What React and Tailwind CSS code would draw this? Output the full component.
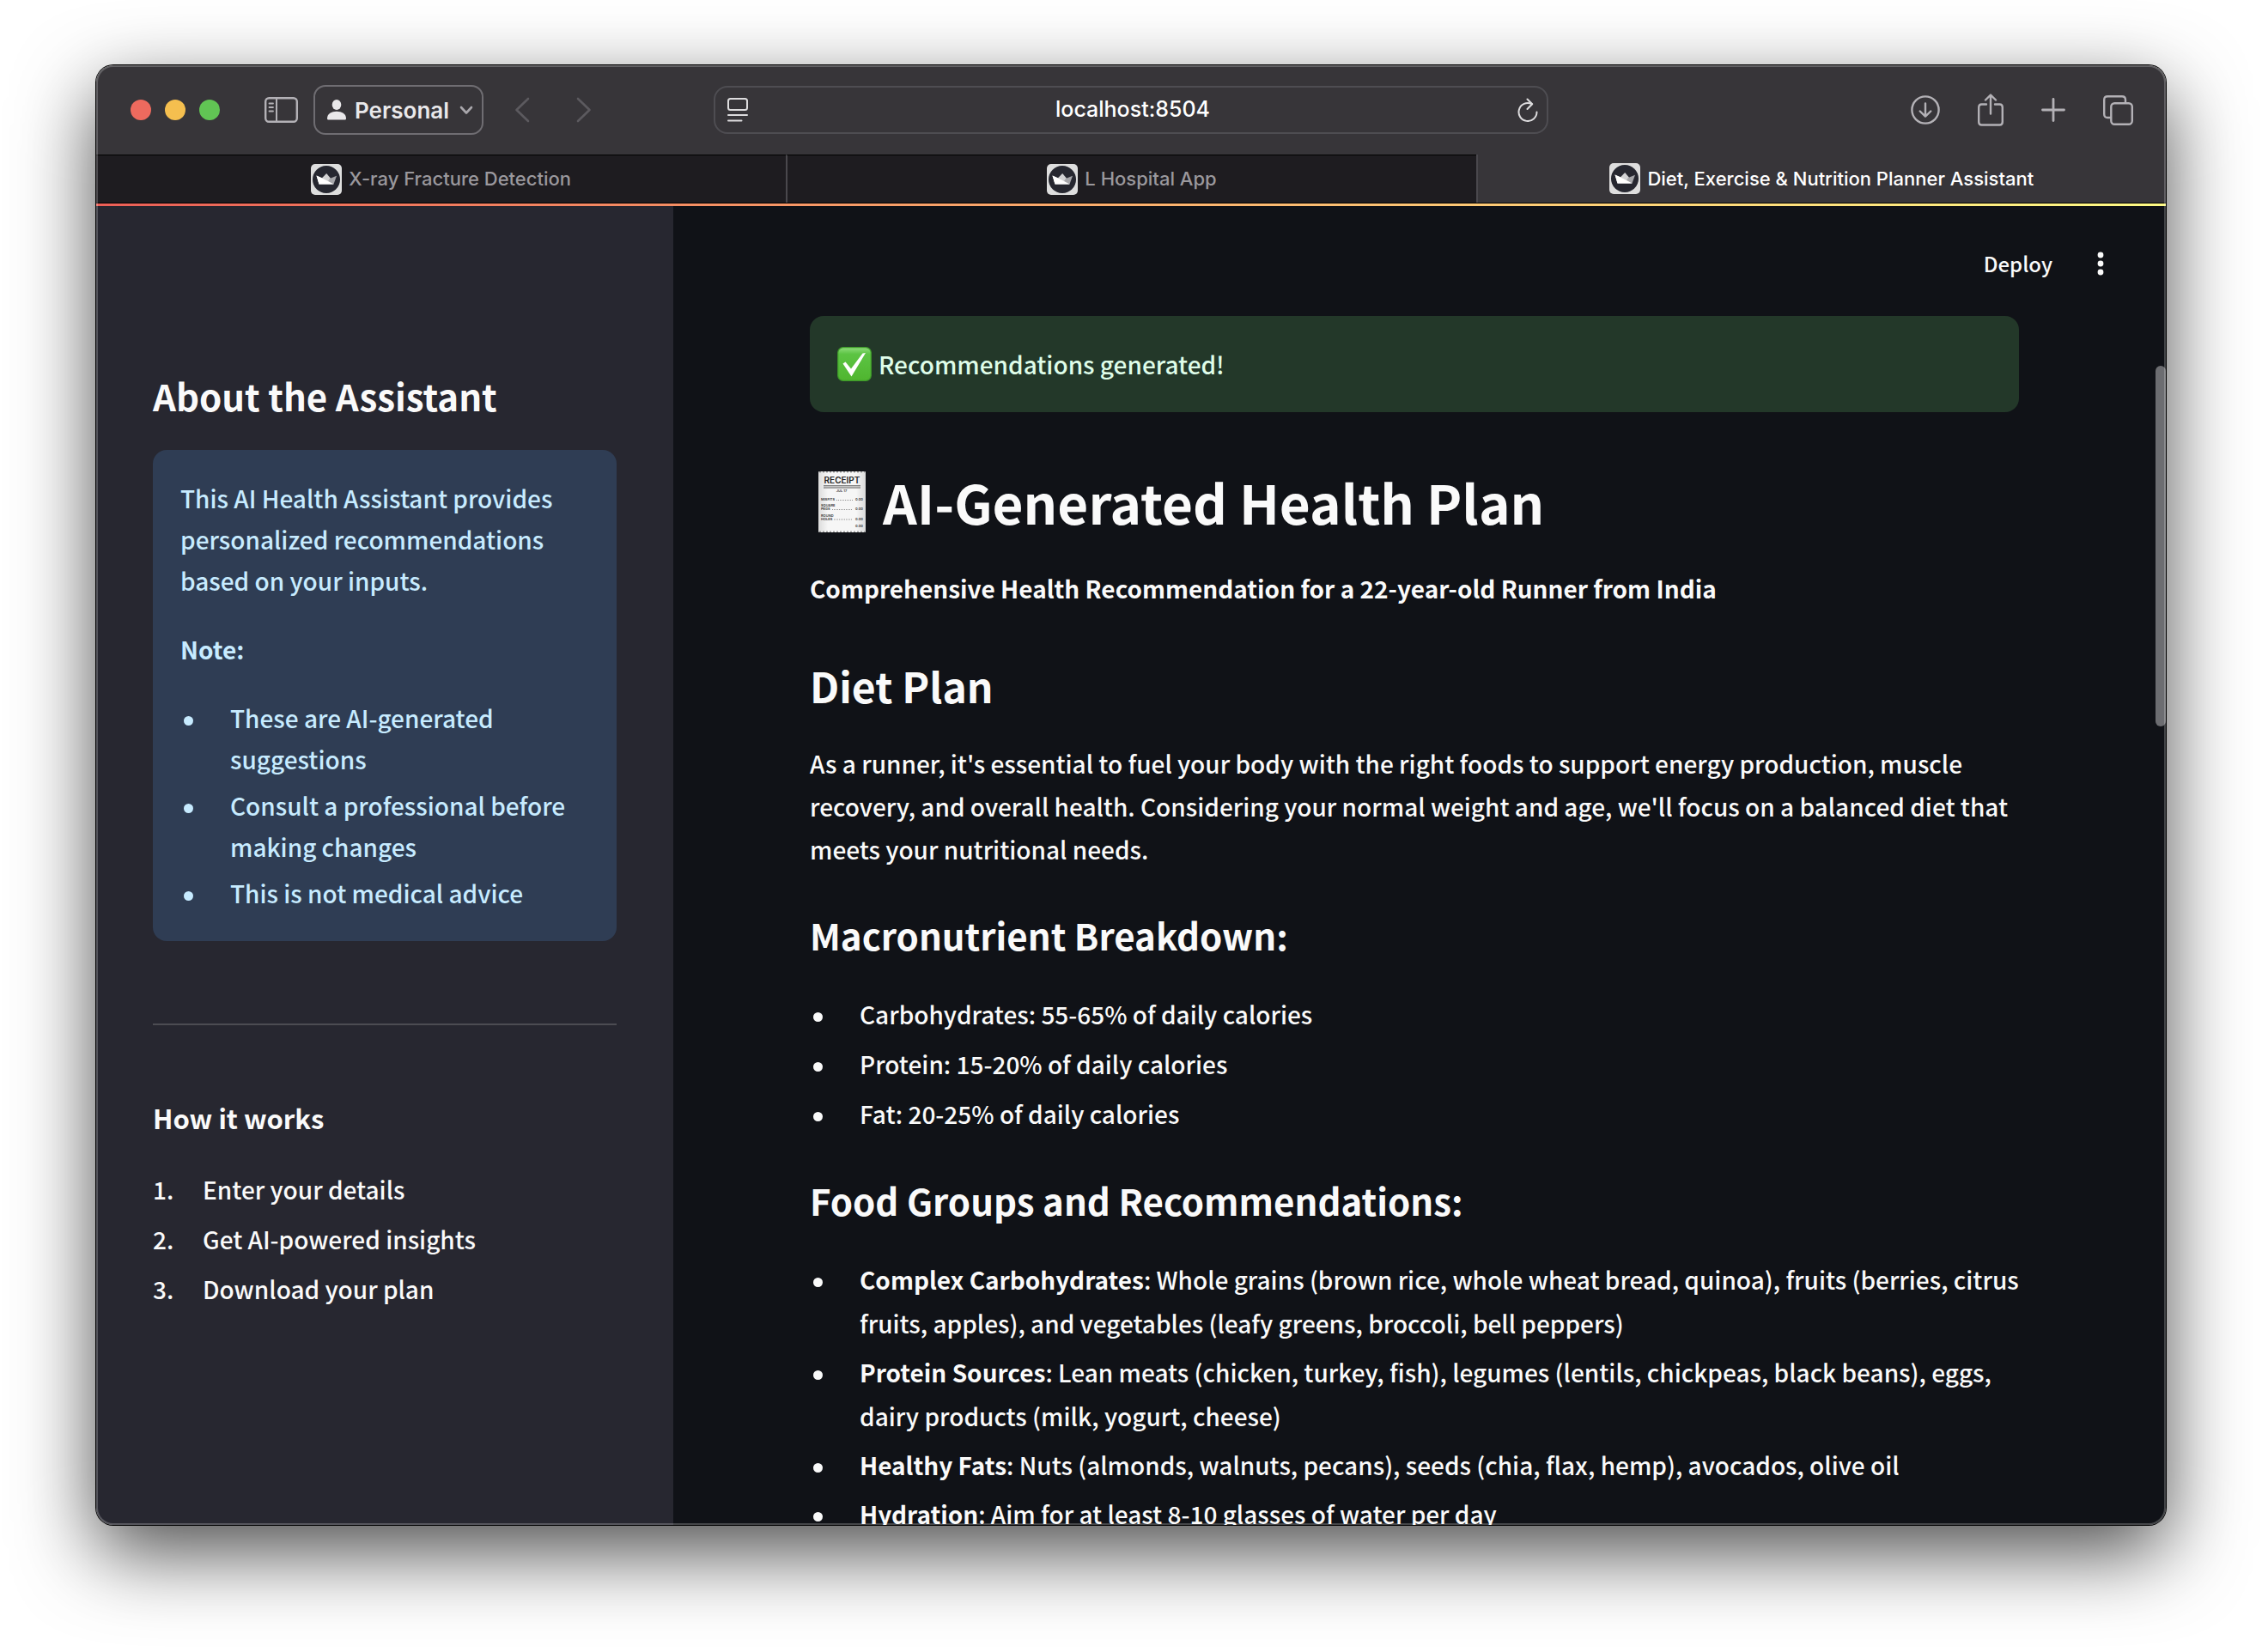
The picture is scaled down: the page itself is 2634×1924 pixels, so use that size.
import React from "react";

function Favicon() {
  return (
    <svg viewBox="0 0 36 36" className="size-9 shrink-0" aria-hidden="true">
      <rect width="36" height="36" rx="5" fill="#dedede" />
      <circle cx="18" cy="18" r="16" fill="#262730" />
      <path d="M6.5 13.5 L13.5 16.5 L26.5 23.5 H9.5 Z" fill="#ffffff" />
      <path d="M12.5 16.8 L18.2 11 L23 16.8 L26.5 23.5 Z" fill="#d2d2d4" />
      <path d="M22 17 L30 13.8 L26.5 23.5 L20 20 Z" fill="#a6a6aa" />
      <path d="M6.5 13.5 L18 19 L26.5 23.5 H9.5 Z" fill="#ffffff" />
    </svg>
  );
}

function SidebarIcon() {
  return (
    <svg viewBox="0 0 39 30" className="h-[30px] w-[39px]" fill="none" stroke="#b3b1b6" strokeLinecap="round">
      <rect x="1.2" y="1.2" width="36.6" height="27.6" rx="4" strokeWidth="2.4" />
      <path d="M14 1.5V28.5" strokeWidth="2" />
      <path d="M5.5 7.5H10M5.5 12H10M5.5 16.5H10" strokeWidth="1.8" />
    </svg>
  );
}

function PersonIcon() {
  return (
    <svg viewBox="0 0 22 24" className="h-6 w-[22px]" fill="#e9e8ea">
      <ellipse cx="11" cy="6" rx="5.3" ry="6" />
      <path d="M0 22C0 16.5 5 13.8 11 13.8S22 16.5 22 22C22 23.2 21.3 23.6 20.3 23.6H1.7C.7 23.6 0 23.2 0 22Z" />
    </svg>
  );
}

function Chevron({ d, box, className, color, width }) {
  return (
    <svg viewBox={box} className={className} fill="none" stroke={color} strokeWidth={width} strokeLinecap="round" strokeLinejoin="round">
      <path d={d} />
    </svg>
  );
}

function ReaderIcon() {
  return (
    <svg viewBox="0 0 24 28" className="h-7 w-6" fill="none" stroke="#dddcde" strokeWidth="2" strokeLinecap="round">
      <rect x="1" y="1" width="22" height="13" rx="2.5" />
      <path d="M1 20H23M1 26.5H16.5" />
    </svg>
  );
}

function ReloadIcon() {
  return (
    <svg viewBox="0 0 24 28" className="h-7 w-6" fill="none" stroke="#dddcde" strokeWidth="2" strokeLinecap="round" strokeLinejoin="round">
      <path d="M16.5 7A10.5 10.5 0 1 0 22.5 16.5" />
      <path d="M11.5 1.5L17.2 7.3L11.5 13" />
    </svg>
  );
}

function DownloadIcon() {
  return (
    <svg viewBox="0 0 34 34" className="size-[34px]" fill="none" stroke="#b3b1b6" strokeWidth="2.4" strokeLinecap="round" strokeLinejoin="round">
      <circle cx="17" cy="17" r="15.6" />
      <path d="M17 9.5V24.5M10.7 18.5L17 24.7L23.3 18.5" />
    </svg>
  );
}

function ShareIcon() {
  return (
    <svg viewBox="0 0 30 38" className="h-[38px] w-[30px]" fill="none" stroke="#b3b1b6" strokeWidth="2.4" strokeLinecap="round" strokeLinejoin="round">
      <path d="M10 12.500H4.500Q1.200 12.500 1.200 16V33Q1.200 36.500 4.500 36.500H25.500Q28.800 36.500 28.800 33V16Q28.800 12.500 25.500 12.500H20" />
      <path d="M15 23.5V1.8M9 7.5L15 1.5L21 7.5" />
    </svg>
  );
}

function PlusIcon() {
  return (
    <svg viewBox="0 0 28 28" className="size-7" fill="none" stroke="#b3b1b6" strokeWidth="2.8" strokeLinecap="round">
      <path d="M14 1.5V26.5M1.5 14H26.5" />
    </svg>
  );
}

function TabsIcon() {
  return (
    <svg viewBox="0 0 35 35" className="size-[35px]" fill="none" stroke="#b3b1b6" strokeWidth="2.4" strokeLinecap="round">
      <rect x="9.3" y="9.3" width="24.5" height="24.5" rx="4" />
      <path d="M8.500 26H5.200Q1.200 26 1.200 22V5.200Q1.200 1.200 5.200 1.200H22Q26 1.200 26 5.200V8.500" />
    </svg>
  );
}

function CheckEmoji() {
  return (
    <svg viewBox="0 0 40 40" className="size-10 shrink-0" role="img" aria-label="Done">
      <defs>
        <linearGradient id="check-fill" x1="0" y1="0" x2="0" y2="1">
          <stop offset="0" stopColor="#8fdc7c" />
          <stop offset="0.2" stopColor="#5cc443" />
          <stop offset="1" stopColor="#4fb52f" />
        </linearGradient>
      </defs>
      <rect x=".7" y=".7" width="38.6" height="38.6" rx="6" fill="url(#check-fill)" stroke="#3f9a2a" strokeWidth="1.2" />
      <path d="M6.5 19.5L9.5 17.5L16 25.5L29.5 7.5L33 7L16.5 34.5Z" fill="#ffffff" />
    </svg>
  );
}

function ReceiptEmoji() {
  return (
    <svg viewBox="0 0 55 71" className="h-[71px] w-[55px] shrink-0" role="img" aria-label="Receipt" fontFamily="Inter, sans-serif">
      <defs>
        <linearGradient id="paper" x1="0" y1="0" x2="1" y2="0">
          <stop offset="0" stopColor="#dcdcdc" />
          <stop offset="0.2" stopColor="#f6f6f6" />
          <stop offset="0.8" stopColor="#f6f6f6" />
          <stop offset="1" stopColor="#dadada" />
        </linearGradient>
      </defs>
      <rect width="55" height="71" rx="1" fill="url(#paper)" />
      <path d="M1 .8H54M1 70.2H54" stroke="#777777" strokeWidth="1" strokeDasharray="2 2" />
      <text x="27.5" y="14" fontSize="10" fontWeight="600" textAnchor="middle" fill="#222222">RECEIPT</text>
      <path d="M6 16.8H49M6 19H49" stroke="#555555" strokeWidth="1" />
      <g fontSize="4" fontWeight="600" fill="#333333">
        <text x="27" y="24" textAnchor="middle">JUL 17</text>
        <text x="3" y="34">MISFITS</text>
        <text x="3" y="41">SQUARE</text>
        <text x="3" y="45">PEGS</text>
        <text x="3" y="52.5">ROUND</text>
        <text x="3" y="56.5">HOLES</text>
        <g textAnchor="end">
          <text x="52" y="34">0.00</text>
          <text x="52" y="45">0.00</text>
          <text x="52" y="56.5">0.00</text>
          <text x="52" y="64.5">0.00</text>
        </g>
      </g>
      <path d="M21 33.5H40M16 44.5H40M18 56H40" stroke="#777777" strokeWidth=".8" strokeDasharray="1 1" />
    </svg>
  );
}

const tabs = [
  { title: "X-ray Fracture Detection", active: false },
  { title: "L Hospital App", active: false },
  { title: "Diet, Exercise & Nutrition Planner Assistant", active: true },
];

function Toolbar() {
  return (
    <div className="grid h-[104px] shrink-0 grid-cols-[20fr_27fr_20fr] items-center bg-[#373539]">
      <div className="flex items-center pl-10">
        <div className="flex gap-4">
          <button aria-label="Close" className="size-6 rounded-full bg-[#ed6a5e]" />
          <button aria-label="Minimize" className="size-6 rounded-full bg-[#f5bf4f]" />
          <button aria-label="Zoom" className="size-6 rounded-full bg-[#61c554]" />
        </div>
        <button aria-label="Show sidebar" className="ml-[52px]">
          <SidebarIcon />
        </button>
        <button className="ml-[18px] flex h-[58px] items-center rounded-[14px] border-2 border-[#6f6d72] pr-2.5 pl-3.5 text-[26px] font-semibold text-[#e9e8ea]">
          <PersonIcon />
          <span className="ml-2.5">Personal</span>
          <Chevron box="0 0 16 12" d="M2 3L8 9.5L14 3" className="ml-3 h-3 w-4" color="#a9a7ac" width="2.6" />
        </button>
        <button aria-label="Back" className="ml-9">
          <Chevron box="0 0 18 30" d="M16 2L2.5 15L16 28" className="h-[30px] w-[18px]" color="#5c5a5f" width="2.6" />
        </button>
        <button aria-label="Forward" className="ml-[54px]">
          <Chevron box="0 0 18 30" d="M2 2L15.5 15L2 28" className="h-[30px] w-[18px]" color="#5c5a5f" width="2.6" />
        </button>
      </div>
      <div className="flex h-14 items-center rounded-2xl border-2 border-[#4e4d52] pr-2.5 pl-3.5">
        <button aria-label="Reader">
          <ReaderIcon />
        </button>
        <input
          aria-label="Address"
          defaultValue="localhost:8504"
          className="min-w-0 flex-1 bg-transparent text-center text-[25px] font-medium text-white outline-none"
        />
        <button aria-label="Reload">
          <ReloadIcon />
        </button>
      </div>
      <div className="flex items-center justify-end gap-11 pr-[38px]">
        <button aria-label="Downloads">
          <DownloadIcon />
        </button>
        <button aria-label="Share">
          <ShareIcon />
        </button>
        <button aria-label="New tab">
          <PlusIcon />
        </button>
        <button aria-label="Tab overview">
          <TabsIcon />
        </button>
      </div>
    </div>
  );
}

function TabBar() {
  return (
    <div className="grid h-[57px] shrink-0 grid-cols-3 border-b border-black">
      {tabs.map((tab, i) => (
        <button
          key={tab.title}
          className={
            "flex items-center justify-center gap-2 text-[22px] font-medium " +
            (tab.active
              ? "bg-[#373539] text-white "
              : "border-t border-t-black bg-[#1e1c20] text-[#9a989d] ") +
            (i > 0 ? "border-l-2 border-l-[#4a484d]" : "")
          }
        >
          <Favicon />
          {tab.title}
        </button>
      ))}
    </div>
  );
}

function Item({ marker, children }) {
  return (
    <li className="flex">
      <span className="w-[58px] shrink-0" aria-hidden="true">
        {marker || <span className="mb-px ml-1 inline-block size-[11px] rounded-full bg-current align-middle" />}
      </span>
      <span>{children}</span>
    </li>
  );
}

function Sidebar() {
  return (
    <aside className="w-[672px] shrink-0 bg-[#272730] px-[66px] pt-48">
      <h2 className="text-[42px] leading-[58px] font-bold">About the Assistant</h2>
      <div className="mt-[34px] rounded-2xl bg-[#2f3d54] p-8 leading-[48px] text-[#c7ebff]">
        <p>This AI Health Assistant provides personalized recommendations based on your inputs.</p>
        <p className="mt-8 font-bold">Note:</p>
        <ul className="mt-8 flex flex-col gap-1.5">
          <Item>These are AI-generated suggestions</Item>
          <Item>Consult a professional before making changes</Item>
          <Item>This is not medical advice</Item>
        </ul>
      </div>
      <hr className="mt-24 border-t-2 border-[#4c4c52]" />
      <h3 className="mt-[86px] text-[31px] leading-[44px] font-bold">How it works</h3>
      <ol className="mt-9 flex flex-col gap-[7px] leading-[51px]">
        <Item marker="1.">Enter your details</Item>
        <Item marker="2.">Get AI-powered insights</Item>
        <Item marker="3.">Download your plan</Item>
      </ol>
    </aside>
  );
}

function Plan() {
  return (
    <div className="mx-auto w-full max-w-[1408px]">
      <div className="flex h-28 items-center gap-2 rounded-2xl bg-[#233829] px-8 text-[#dffde9]">
        <CheckEmoji />
        Recommendations generated!
      </div>
      <h1 className="mt-[61px] flex items-center gap-5 pl-2.5 text-[62px] leading-[86px] font-bold">
        <ReceiptEmoji />
        AI-Generated Health Plan
      </h1>
      <p className="mt-[33px] leading-[50px] font-bold">
        Comprehensive Health Recommendation for a 22-year-old Runner from India
      </p>
      <h2 className="mt-[55px] text-[48px] leading-[67px] font-bold">Diet Plan</h2>
      <p className="mt-8 leading-[50px]">
        As a runner, it's essential to fuel your body with the right foods to support energy production, muscle
        recovery, and overall health. Considering your normal weight and age, we'll focus on a balanced diet that meets
        your nutritional needs.
      </p>
      <h3 className="mt-[46px] text-[42px] leading-[58px] font-bold">Macronutrient Breakdown:</h3>
      <ul className="mt-[38px] flex flex-col gap-[7px] leading-[51px]">
        <Item>Carbohydrates: 55-65% of daily calories</Item>
        <Item>Protein: 15-20% of daily calories</Item>
        <Item>Fat: 20-25% of daily calories</Item>
      </ul>
      <h3 className="mt-[46px] text-[42px] leading-[58px] font-bold">Food Groups and Recommendations:</h3>
      <ul className="mt-[38px] flex flex-col gap-1.5 leading-[51px]">
        <Item>
          <strong>Complex Carbohydrates</strong>: Whole grains (brown rice, whole wheat bread, quinoa), fruits (berries,
          citrus fruits, apples), and vegetables (leafy greens, broccoli, bell peppers)
        </Item>
        <Item>
          <strong>Protein Sources</strong>: Lean meats (chicken, turkey, fish), legumes (lentils, chickpeas, black
          beans), eggs, dairy products (milk, yogurt, cheese)
        </Item>
        <Item>
          <strong>Healthy Fats</strong>: Nuts (almonds, walnuts, pecans), seeds (chia, flax, hemp), avocados, olive oil
        </Item>
        <Item>
          <strong>Hydration</strong>: Aim for at least 8-10 glasses of water per day
        </Item>
      </ul>
    </div>
  );
}

export default function App() {
  return (
    <div className="h-screen bg-white px-28 pt-[76px] pb-[148px] font-['Inter',sans-serif]">
      <div className="relative flex h-full flex-col overflow-hidden rounded-[20px] shadow-[0_0_0_1px_#000000,0_32px_92px_rgba(0,0,0,0.7)]">
        <Toolbar />
        <TabBar />
        <div className="h-[3px] shrink-0 bg-linear-to-r from-[#ec5f57] to-[#fefb85]" />
        <div className="flex min-h-0 flex-1 font-['Noto_Sans_CJK_SC','Noto_Sans',sans-serif] text-[28px] font-medium text-[#fafafa]">
          <Sidebar />
          <main className="flex min-w-0 flex-1 bg-[#101217]">
            <div className="min-w-0 flex-1">
              <header className="-mr-3 flex h-32 items-center justify-end gap-[52px] pt-1.5 pr-[72px]">
                <button className="text-2xl">Deploy</button>
                <button aria-label="Menu">
                  <svg viewBox="0 0 8 28" className="h-7 w-2" fill="#fafafa">
                    <circle cx="4" cy="4" r="3.4" />
                    <circle cx="4" cy="14" r="3.4" />
                    <circle cx="4" cy="24" r="3.4" />
                  </svg>
                </button>
              </header>
              <Plan />
            </div>
            <div className="w-3 shrink-0 pt-[186px]">
              <div className="h-[420px] rounded-full bg-[#6c6d71]" />
            </div>
          </main>
        </div>
        <div className="pointer-events-none absolute inset-0 rounded-[20px] shadow-[inset_0_0_0_2px_rgba(255,255,255,0.22)]" />
      </div>
    </div>
  );
}
